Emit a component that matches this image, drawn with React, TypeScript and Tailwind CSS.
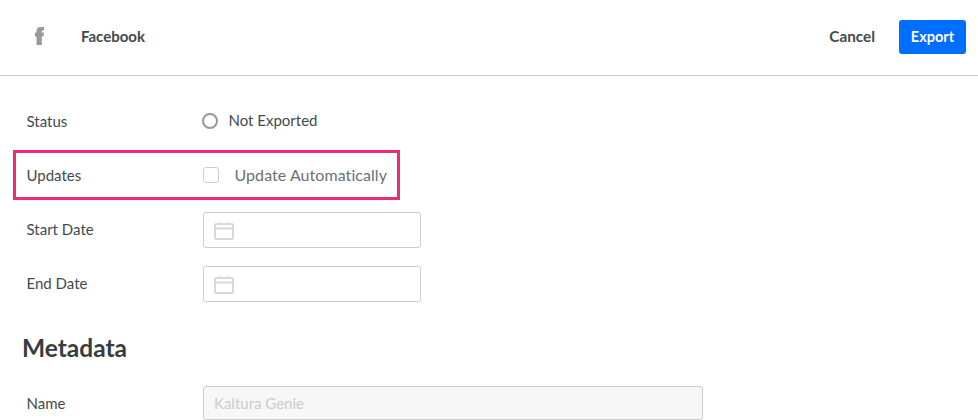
import React from "react";

function Cal() {
  return (
    <svg width="20" height="19" viewBox="0 0 20 19" fill="none" stroke="#d9d9d9" strokeWidth="2" className="shrink-0">
      <rect x="1" y="3" width="18" height="15" rx="1.5" />
      <path d="M1 7.500h18" />
      <path d="M5.500 0.500v2.500M14.500 0.500v2.500" strokeWidth="1" />
    </svg>
  );
}

function Row({ label, children, h }: { label: string; children: React.ReactNode; h: string }) {
  return (
    <div className={`flex items-center ${h}`}>
      <div className="w-[176.500px] shrink-0 text-[15px] leading-5 text-[#434a4b]">{label}</div>
      {children}
    </div>
  );
}

function DateRow({ label }: { label: string }) {
  return (
    <div className="flex h-9 items-center">
      <div className="mb-[2px] w-[176.500px] shrink-0 text-[15px] leading-5 text-[#434a4b]">{label}</div>
      <div className="flex h-9 w-[218px] items-center rounded-[3px] border border-[#cccccc] bg-white pl-[10px]">
        <Cal />
      </div>
    </div>
  );
}

export default function App() {
  return (
    <div className="h-[420px] w-[978px] overflow-hidden bg-white font-['Lato','Open_Sans',sans-serif]">
      <header className="flex h-[76px] items-center justify-between border-b border-[#cccccc] pb-[3px] pl-[35px] pr-[12px]">
        <div className="flex items-center">
          <svg width="9" height="18" viewBox="0 0 9 18" className="shrink-0">
            <path fill="#999999" d="M1.500 18V9.500H0V5.500h1.500V4C1.500 1.500 3 0 5.500 0H9v3.500H7.500C6.800 3.500 6.800 4 6.800 4.500V5.500H9L8.500 9.500H6.800V18z" />
          </svg>
          <span className="ml-[37px] text-[15px] font-bold text-[#434a4b]">Facebook</span>
        </div>
        <div className="flex items-center">
          <span className="text-[15.300px] font-bold text-[#434a4b]">Cancel</span>
          <button className="ml-6 mt-[2px] h-[34px] w-[67px] rounded-[3px] bg-[#006eff] pb-px text-[14.500px] font-bold text-white">Export</button>
        </div>
      </header>
      <main className="pl-[26.500px]">
        <div className="mt-[27px]">
          <Row label="Status" h="h-9">
            <span className="-ml-px box-border h-4 w-4 rounded-full border-2 border-[#999999]" />
            <span className="mb-[2px] ml-[10.500px] text-[15px] text-[#434a4b]">Not Exported</span>
          </Row>
        </div>
        <div className="relative mt-[18px]">
          <div className="absolute -left-[13.500px] -top-[7px] h-[50px] w-[387px] border-[3px] border-[#ee2a7b]" />
          <Row label="Updates" h="h-9">
            <span className="h-4 w-4 rounded-[3px] border border-[#cccccc]" />
            <span className="ml-[15.500px] text-[16px] tracking-[0.06px] text-[#6b7073]">Update Automatically</span>
          </Row>
        </div>
        <div className="mt-[19px]">
          <DateRow label="Start Date" />
        </div>
        <div className="mt-[18px]">
          <DateRow label="End Date" />
        </div>
        <h2 className="-ml-[4.500px] mt-[28px] text-[24.500px] font-bold leading-[36px] text-[#383c3d]">Metadata</h2>
        <div className="mt-[20px]">
          <Row label="Name" h="h-[34px]">
            <div className="flex h-[34px] w-[500px] items-center rounded-[3px] border border-[#cccccc] bg-[#f7f7f7] pl-[10px] text-[15px] text-[#cccccc]">Kaltura Genie</div>
          </Row>
        </div>
      </main>
    </div>
  );
}
